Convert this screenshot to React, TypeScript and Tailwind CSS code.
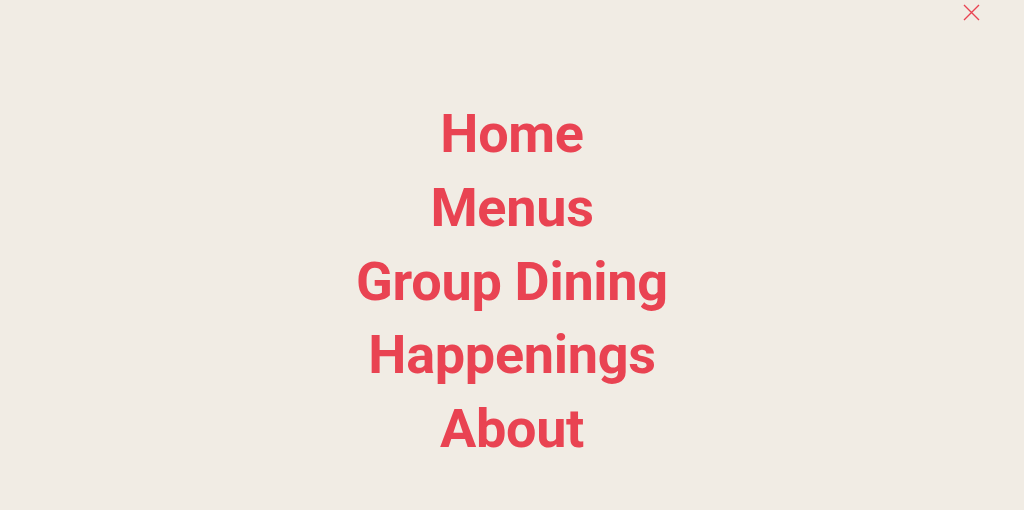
export default function App() {
  const links = ["Home", "Menus", "Group Dining", "Happenings", "About"];
  return (
    <div className="relative min-h-screen h-[510px] bg-[#f1ece4] overflow-hidden">
      <button className="absolute right-[44px] top-[4px] w-[17px] h-[17px] text-[#e94352]" aria-label="Close">
        <svg viewBox="0 0 17 17" className="w-full h-full" fill="none" stroke="currentColor" strokeWidth="1.4">
          <path d="M1 1L16 16M16 1L1 16" />
        </svg>
      </button>
      <nav className="flex flex-col items-center pt-[97px]">
        {links.map((l) => (
          <a
            key={l}
            href="#"
            className="text-[54px] leading-[73.8px] font-bold tracking-[-0.3px] text-[#e94352] font-['Roboto',sans-serif]"
          >
            {l}
          </a>
        ))}
      </nav>
    </div>
  );
}
